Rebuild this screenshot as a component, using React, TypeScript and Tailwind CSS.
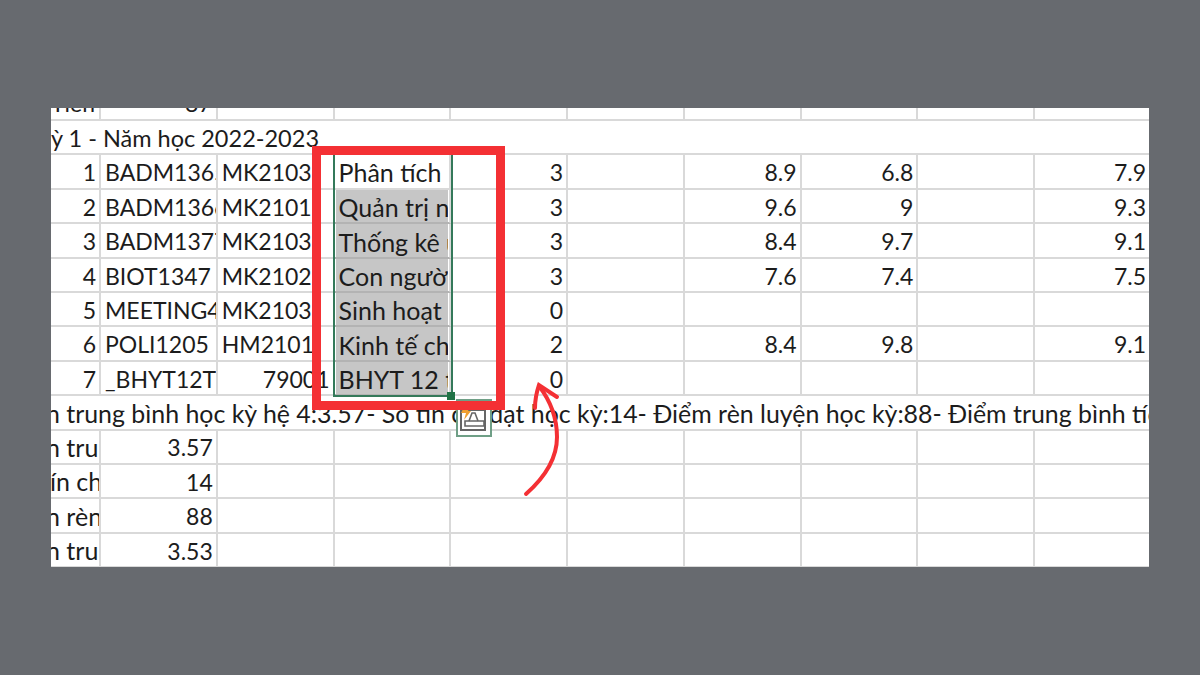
const rows = [
  ['1', 'BADM1365', 'MK2103', 'Phân tích', '3', '', '8.9', '6.8', '', '7.9'],
  ['2', 'BADM1366', 'MK2101', 'Quản trị nguồn', '3', '', '9.6', '9', '', '9.3'],
  ['3', 'BADM1377', 'MK2103', 'Thống kê ứng dụng', '3', '', '8.4', '9.7', '', '9.1'],
  ['4', 'BIOT1347', 'MK2102', 'Con người và', '3', '', '7.6', '7.4', '', '7.5'],
  ['5', 'MEETING4', 'MK2103', 'Sinh hoạt lớp', '0', '', '', '', '', ''],
  ['6', 'POLI1205', 'HM2101', 'Kinh tế chính trị', '2', '', '8.4', '9.8', '', '9.1'],
  ['7', '_BHYT12T', '79001', 'BHYT 12 tháng', '0', '', '', '', '', ''],
];

const summary = [
  ['n trung bình', '3.57', '-ml-[5px]'],
  ['ín ch', '14', '-ml-[1px]'],
  ['n rèn luyện', '88', '-ml-[5px]'],
  ['n trung bình', '3.53', '-ml-[5px]'],
];

const line = 'border-r-2 border-b-2 border-[#d9d9d9]';
const base = 'flex items-center overflow-hidden whitespace-nowrap pl-1 pt-[2px]';

function EmptyCells({ count }: { count: number }) {
  return (
    <>
      {Array.from({ length: count }).map((_, i) => (
        <div key={i} className={i === count - 1 ? 'border-b-2 border-[#d9d9d9]' : line} />
      ))}
    </>
  );
}

function PasteIcon() {
  return (
    <div className="absolute left-[405px] top-[291px] h-[38px] w-[36px] border-2 border-[#6f9f86] bg-white">
      <svg viewBox="0 0 32 34" className="h-full w-full" fill="none">
        <path d="M3 10v19h24V10" stroke="#666" strokeWidth="2" />
        <path d="M2 9h26" stroke="#666" strokeWidth="2" />
        <path d="M7 20h19v5H7z" stroke="#666" strokeWidth="1.6" />
        <path d="M11 20l3-8h3l3 8" stroke="#666" strokeWidth="1.6" />
        <path d="M6 6h6l-2 4h3l-7 9 2-7H3z" fill="#f0a030" />
      </svg>
    </div>
  );
}

export default function App() {
  return (
    <div
      className="flex h-screen items-center justify-center bg-[#676a6f] text-[#1c1c1c]"
      style={{ fontFamily: 'Lato, "Noto Sans", sans-serif' }}
    >
      <div className="relative h-[459px] w-[1098px] overflow-hidden bg-white text-[23px]">
        <div className="grid grid-cols-[50px_repeat(8,116.75px)_114px] grid-rows-[13px_repeat(13,34.4px)]">
          {/* Clipped row above the term title */}
          <div className={`${line} flex items-end justify-end overflow-hidden pr-1`}>
            <span className="mb-[4px] leading-none">Tiền</span>
          </div>
          <div className={`${line} flex items-end justify-end overflow-hidden pr-1`}>
            <span className="mb-[4px] leading-none">87</span>
          </div>
          <EmptyCells count={8} />

          {/* Term title */}
          <div className="col-span-10 flex items-center overflow-hidden whitespace-nowrap border-b-2 border-[#d9d9d9] pt-[2px] text-[23.5px]">
            ỳ 1 - Năm học 2022-2023
          </div>

          {/* Course rows */}
          {rows.map((row, r) =>
            row.map((value, c) => {
              const isNumber = c === 0 || c >= 4 || value === '79001';
              const isName = c === 3;
              const isGray = isName && r > 0;
              const edge = c === 9 ? 'border-b-2 border-[#d9d9d9]' : line;
              return (
                <div
                  key={`${r}-${c}`}
                  className={`${base} ${edge} ${isNumber ? 'justify-end pr-[3px]' : 'pr-1'} ${
                    isName ? 'text-[25px]' : ''
                  } ${isGray ? 'border-b-[#b3b3b3]' : ''}`}
                >
                  {isGray ? (
                    <span className="-my-1 -ml-[3px] -mr-1 flex h-[36px] w-[112px] shrink-0 items-center overflow-hidden bg-[#c6c6c6] pl-[3px] pt-[2px]">
                      {value}
                    </span>
                  ) : (
                    value
                  )}
                </div>
              );
            }),
          )}

          {/* Summary line */}
          <div className="col-span-10 flex items-center overflow-hidden whitespace-nowrap border-b-2 border-[#d9d9d9] pt-[2px] text-[24.9px]">
            <span className="-ml-[5px]">
              n trung bình học kỳ hệ 4:3.57- Số tín chỉ đạt học kỳ:14- Điểm rèn luyện học kỳ:88- Điểm trung bình tích lũy
            </span>
          </div>

          {/* Summary rows */}
          {summary.map(([label, value, offset]) => (
            <div key={value} className="contents">
              <div className={`${line} flex items-center overflow-hidden whitespace-nowrap pt-[2px] text-[25px]`}>
                <span className={offset}>{label}</span>
              </div>
              <div className={`${base} ${line} justify-end pr-[3px]`}>{value}</div>
              <EmptyCells count={8} />
            </div>
          ))}
        </div>

        {/* Excel selection */}
        <div className="absolute left-[282px] top-[40px] h-[249px] w-[120px] border-2 border-[#34795a]" />
        <div className="absolute left-[396px] top-[284px] h-[8px] w-[8px] bg-[#217346]" />

        <PasteIcon />

        {/* Red highlight */}
        <div className="absolute left-[261px] top-[38px] h-[264px] w-[193px] border-[9px] border-[#f43034]" />

        <svg className="absolute left-[460px] top-[265px] h-[140px] w-[70px]" viewBox="0 0 70 140" fill="none">
          <path
            d="M15 121C32 106 46 86 46 64 46 44 38 26 28 13"
            stroke="#f43034"
            strokeWidth="4"
            strokeLinecap="round"
          />
          <path d="M24 35C24 26 26 18 28 12 34 16 40 20 46 24" stroke="#f43034" strokeWidth="4" strokeLinecap="round" />
        </svg>
      </div>
    </div>
  );
}
